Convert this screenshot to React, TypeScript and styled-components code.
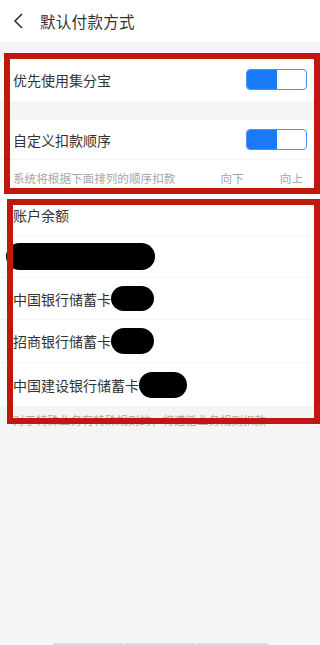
import styled, { createGlobalStyle } from "styled-components";

const GlobalStyle = createGlobalStyle`
  html, body {
    margin: 0;
    padding: 0;
    background: #f5f5f5;
  }
  body {
    font-family: "Noto Sans CJK SC", "Noto Sans", sans-serif;
    color: #333;
  }
`;

const Page = styled.div`
  position: relative;
  min-height: 100vh;
  display: flex;
  flex-direction: column;
  overflow: hidden;
`;

const Header = styled.div`
  height: 42px;
  background: #fff;
  display: flex;
  align-items: center;
  padding-left: 12px;
  gap: 14px;
`;

const Title = styled.div`
  font-size: 15.5px;
  color: #333;
  letter-spacing: 0.3px;
`;

const Section = styled.div<{ $top: number }>`
  margin-top: ${(p) => p.$top}px;
  background: #fff;
`;

const Row = styled.div<{ $h: number; $line?: boolean }>`
  height: ${(p) => p.$h}px;
  display: flex;
  align-items: center;
  padding: 0 13px;
  font-size: 14px;
  color: #333;
  border-bottom: ${(p) => (p.$line ? "1px solid #f4f4f4" : "none")};
  box-sizing: border-box;
`;

const Label = styled.span`
  flex: 1;
  white-space: nowrap;
  display: flex;
  align-items: center;
`;

const Hint = styled.div`
  height: 35px;
  display: flex;
  align-items: center;
  padding: 0 17px 0 13px;
  font-size: 11.6px;
  color: #a5a5a5;
`;

const HintText = styled.span`
  flex: 1;
`;

const HintAction = styled.span`
  margin-left: 36px;
`;

const Toggle = styled.div`
  width: 61px;
  height: 21px;
  box-sizing: border-box;
  border: 1px solid #4a90f5;
  border-radius: 4px;
  display: flex;
  overflow: hidden;
  margin-right: 0;
`;

const ToggleOn = styled.div`
  width: 30px;
  background: #1a7af8;
`;

const Redact = styled.span<{ $w: number; $h: number; $shift?: number }>`
  display: inline-block;
  width: ${(p) => p.$w}px;
  height: ${(p) => p.$h}px;
  background: #000;
  border-radius: ${(p) => p.$h / 2}px;
  margin-left: ${(p) => p.$shift ?? 0}px;
`;

const Footer = styled.div`
  padding: 6px 13px 0;
  font-size: 11.5px;
  color: #a5a5a5;
  white-space: nowrap;
`;

const Spacer = styled.div`
  flex: 1;
`;

const HomeBar = styled.div`
  display: flex;
  justify-content: center;
  gap: 1px;
  height: 2px;
`;

const HomeSeg = styled.div`
  width: 71px;
  background: #dcdcdc;
`;

const Mark = styled.div<{ $l: number; $t: number; $w: number; $h: number }>`
  position: absolute;
  left: ${(p) => p.$l}px;
  top: ${(p) => p.$t}px;
  width: ${(p) => p.$w}px;
  height: ${(p) => p.$h}px;
  border: 6px solid #c1170e;
  box-sizing: border-box;
  pointer-events: none;
`;

function BackIcon() {
  return (
    <svg width="14" height="18" viewBox="0 0 14 18">
      <path d="M10 2 L3 9 L10 16" fill="none" stroke="#333" strokeWidth="1.6" />
    </svg>
  );
}

export default function App() {
  return (
    <Page>
      <GlobalStyle />
      <Header>
        <BackIcon />
        <Title>默认付款方式</Title>
      </Header>

      <Section $top={16}>
        <Row $h={43}>
          <Label>优先使用集分宝</Label>
          <Toggle>
            <ToggleOn />
          </Toggle>
        </Row>
      </Section>

      <Section $top={19}>
        <Row $h={40} $line>
          <Label>自定义扣款顺序</Label>
          <Toggle>
            <ToggleOn />
          </Toggle>
        </Row>
        <Hint>
          <HintText>系统将根据下面排列的顺序扣款</HintText>
          <HintAction>向下</HintAction>
          <HintAction>向上</HintAction>
        </Hint>
        <Row $h={41} $line>
          <Label>账户余额</Label>
        </Row>
        <Row $h={42} $line>
          <Label>
            <Redact $w={149} $h={27} $shift={-7} />
          </Label>
        </Row>
        <Row $h={42} $line>
          <Label>
            中国银行储蓄卡
            <Redact $w={43} $h={25} />
          </Label>
        </Row>
        <Row $h={43} $line>
          <Label>
            招商银行储蓄卡
            <Redact $w={43} $h={26} />
          </Label>
        </Row>
        <Row $h={43}>
          <Label>
            中国建设银行储蓄卡
            <Redact $w={48} $h={26} />
          </Label>
        </Row>
      </Section>

      <Footer>对于特殊业务有特殊规则的，将遵循业务规则扣款</Footer>
      <Spacer />
      <HomeBar>
        <HomeSeg />
        <HomeSeg />
        <HomeSeg />
      </HomeBar>

      <Mark $l={4} $t={53} $w={316} $h={141} />
      <Mark $l={7} $t={199} $w={313} $h={225} />
    </Page>
  );
}
